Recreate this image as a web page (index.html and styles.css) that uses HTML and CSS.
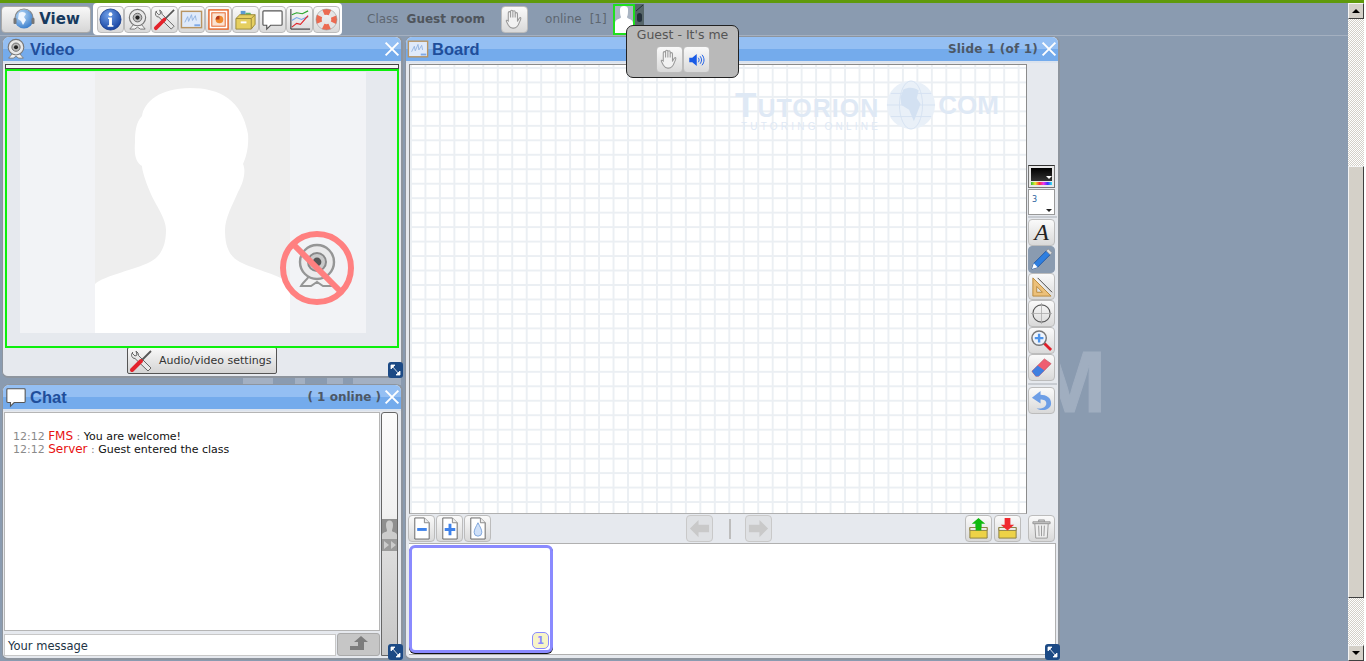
FILE: index.html
```html
<!DOCTYPE html>
<html lang="en">
<head>
<meta charset="UTF-8">
<title>Tutorion classroom</title>
<link rel="stylesheet" href="styles.css">
</head>
<body>
<svg class="defs" width="0" height="0">
  <defs>
    <radialGradient id="blue" cx="40%" cy="30%" r="75%"><stop offset="0" stop-color="#6f9fe8"/><stop offset="1" stop-color="#123f9e"/></radialGradient>
    <radialGradient id="sky" cx="35%" cy="30%" r="80%"><stop offset="0" stop-color="#bcdcf8"/><stop offset="1" stop-color="#2f76c8"/></radialGradient>
    <symbol id="i-globe" viewBox="0 0 24 24">
      <circle cx="12" cy="12" r="9.500" fill="url(#sky)"/>
      <path d="M7 6c3-2 6-1 7 1l-2 3 2 3-3 5-2-4-3-2z" fill="#eef6ff"/>
      <path d="M3 14V11a9 9 0 0 1 18 0v3" fill="none" stroke="#888" stroke-width="1.200"/>
      <rect x="1.500" y="11" width="3" height="6" rx="1" fill="#777"/><rect x="19.500" y="11" width="3" height="6" rx="1" fill="#777"/>
    </symbol>
    <symbol id="i-info" viewBox="0 0 24 24">
      <circle cx="12" cy="12" r="11" fill="url(#blue)" stroke="#0e3487" stroke-width=".8"/>
      <circle cx="12" cy="6.500" r="2" fill="#fff"/><path d="M9.500 10h4v8h1.500v1.500H9V18h1.500v-6.500h-1z" fill="#fff"/>
    </symbol>
    <symbol id="i-cam" viewBox="0 0 24 24">
      <path d="M8 17c-1 2-3 3-4 5h5l3-2 3 2h5c-1-2-3-3-4-5z" fill="#f2f2f2" stroke="#777"/>
      <circle cx="12" cy="10" r="8.500" fill="#e8e8e8" stroke="#777" stroke-width="1.200"/>
      <circle cx="12" cy="10" r="4.500" fill="#bbb" stroke="#666"/><circle cx="12" cy="10" r="2.200" fill="#222"/>
    </symbol>
    <symbol id="i-tools" viewBox="0 0 24 24">
      <path d="M4 3c-2 2-2 4 0 6l2 .5L19 22l3-3L9.500 6.500 9 4l-2-2 1 4-2 1-3-3z" fill="#e8e8e8" stroke="#666"/>
      <path d="M22 2 12 12" stroke="#555" stroke-width="1.800"/>
      <path d="M12 12 3 21" stroke="#e3222b" stroke-width="4" stroke-linecap="round"/>
    </symbol>
    <symbol id="i-board" viewBox="0 0 24 24">
      <rect x="1.500" y="3.500" width="21" height="17" fill="#dfeafa" stroke="#b89563" stroke-width="1.500"/>
      <path d="M5 15l3-6 1 5 3-7 1 6 3-5 1 5" fill="none" stroke="#93b4e0"/>
      <rect x="15" y="17" width="6" height="2" fill="#7fa9e6"/>
    </symbol>
    <symbol id="i-slides" viewBox="0 0 24 24">
      <rect x="2" y="2" width="20" height="20" fill="#fff" stroke="#e5652a" stroke-width="1.500"/>
      <rect x="5" y="5" width="14" height="14" fill="#fbe3d2" stroke="#e5652a"/>
      <circle cx="13" cy="12" r="4" fill="#ef8a2e"/><path d="M13 12V8a4 4 0 0 0-4 4z" fill="#b5381b"/>
    </symbol>
    <symbol id="i-files" viewBox="0 0 24 24">
      <path d="M7 3h5v5H7z" fill="#5b9ad1"/><path d="M12 5h5l3 5h-8z" fill="#5fb56a"/>
      <path d="M2 11l4-4h16v10l-4 5H2z" fill="#e6cf5f" stroke="#9c8a39"/>
      <path d="M18 11v11M2 11h16l4-4" fill="none" stroke="#9c8a39"/>
      <rect x="7" y="14" width="6" height="2" fill="#fff"/>
    </symbol>
    <symbol id="i-bubble" viewBox="0 0 24 24">
      <path d="M3 3h18a1 1 0 0 1 1 1v13a1 1 0 0 1-1 1H10l-4 4v-4H3a1 1 0 0 1-1-1V4a1 1 0 0 1 1-1z" fill="#fff" stroke="#555" stroke-width="1.200"/>
    </symbol>
    <symbol id="i-chart" viewBox="0 0 24 24">
      <path d="M3 1v21h20" fill="none" stroke="#222"/>
      <path d="M4 7l5-2 6 1 6-3" fill="none" stroke="#2ca52c" stroke-width="1.200"/>
      <path d="M4 13l5-3 5 2 7-3" fill="none" stroke="#79a8e8" stroke-width="1.200"/>
      <path d="M4 20l5-4 4 1 8-9" fill="none" stroke="#e0262b" stroke-width="1.200"/>
    </symbol>
    <symbol id="i-buoy" viewBox="0 0 24 24">
      <circle cx="12" cy="12" r="8" fill="none" stroke="#e4e4e4" stroke-width="6"/>
      <circle cx="12" cy="12" r="8" fill="none" stroke="#ec6a50" stroke-width="6" stroke-dasharray="7 5.570" stroke-dashoffset="3.500"/>
      <circle cx="12" cy="12" r="11" fill="none" stroke="#999" stroke-width=".6"/>
    </symbol>
    <symbol id="i-hand" viewBox="0 0 24 24">
      <path d="M6.500 13V6a1.200 1.200 0 0 1 2.400 0v5V4.500a1.200 1.200 0 0 1 2.400 0V11V5a1.200 1.200 0 0 1 2.400 0v6V7a1.200 1.200 0 0 1 2.400 0v8c1 -2 2-4 3-4 1 .3.500 2-1 5-1 3-3 6-6 6h-1c-2.500 0-3.500-1.500-4.500-3l-2-4c-.7-1.200.6-1.800 1.900-.5z" fill="#f2f2f2" stroke="#999" stroke-width="1.100" transform="translate(-1 -1)"/>
    </symbol>
    <symbol id="i-sound" viewBox="0 0 24 24">
      <path d="M3 9h4l6-5v16l-6-5H3z" fill="#1a5be6"/>
      <path d="M15 9c1.500 2 1.500 4 0 6M17.500 7c2.500 3 2.500 7 0 10M20 5c3.500 4 3.500 10 0 14" fill="none" stroke="#1a5be6" stroke-width="1.300"/>
    </symbol>
    <symbol id="i-pen" viewBox="0 0 24 24">
      <path d="M2 22l2-6L17 3l4 4L8 20z" fill="#2f7fe0" stroke="#174f9c" stroke-width=".8"/>
      <path d="M17 3l2-2 4 4-2 2z" fill="#ddd" stroke="#888" stroke-width=".6"/>
      <path d="M2 22l2-6 4 4z" fill="#fff"/>
    </symbol>
    <symbol id="i-square" viewBox="0 0 24 24">
      <path d="M3 3v19h19zM7 12v6h6z" fill="#ecc07a" stroke="#b98a3e" fill-rule="evenodd"/>
      <path d="M8 3l15 15" stroke="#444"/>
    </symbol>
    <symbol id="i-circle" viewBox="0 0 24 24">
      <circle cx="12" cy="12" r="9" fill="none" stroke="#555" stroke-width="1.100"/>
      <path d="M12 1v22M1 12h22" stroke="#aaa" stroke-width=".8"/>
    </symbol>
    <symbol id="i-zoom" viewBox="0 0 24 24">
      <path d="M14 14l8 8" stroke="#e0202a" stroke-width="3"/>
      <circle cx="9.500" cy="9.500" r="7.500" fill="#eef4fc" stroke="#777" stroke-width="1.500"/>
      <path d="M9.500 5v9M5 9.500h9" stroke="#4e94ea" stroke-width="2.500"/>
    </symbol>
    <symbol id="i-eraser" viewBox="0 0 24 24">
      <path d="M2 16L15 3l7 5L9 21H6z" fill="#ef5d70" stroke="#b7404e" stroke-width=".6"/>
      <path d="M2 16l6-6 7 5-6 6H6z" fill="#3f7fe0"/>
    </symbol>
    <symbol id="i-undo" viewBox="0 0 24 24">
      <path d="M2 9l9-7v4c6 0 11 3 11 9 0 4-4 7-9 7-3 0-5-1-6-2 5 1 10-1 10-5 0-3-3-4-6-4v4z" fill="#6d9ee6"/>
    </symbol>
    <symbol id="i-page" viewBox="0 0 24 24">
      <path d="M5 1h10l5 5v17H5z" fill="#fff" stroke="#666"/><path d="M15 1v5h5" fill="#eee" stroke="#888"/>
    </symbol>
    <symbol id="i-up" viewBox="0 0 24 24">
      <path d="M12 1l7 6h-4v6H9V7H5z" fill="#0fba0f"/>
      <path d="M3 11h18v11H3z" fill="#edd247" stroke="#8b8043"/><path d="M3 11h18v3H3z" fill="#f2f2f2" stroke="#8b8043"/><path d="M9 7h6v7H9z" fill="#0fba0f"/>
    </symbol>
    <symbol id="i-down" viewBox="0 0 24 24">
      <path d="M3 11h18v11H3z" fill="#edd247" stroke="#8b8043"/><path d="M3 11h18v3H3z" fill="#f2f2f2" stroke="#8b8043"/>
      <path d="M9 1h6v7h4l-7 6-7-6h4z" fill="#f0282e"/>
    </symbol>
    <symbol id="i-trash" viewBox="0 0 24 24">
      <path d="M3 5h18v2H3zM9 5V3h6v2" fill="#ccc" stroke="#888" stroke-width=".8"/>
      <path d="M5 7h14l-1 15H6z" fill="#eee" stroke="#999"/>
      <path d="M9 9l.5 11M12 9v11M15 9l-.5 11" stroke="#999"/>
    </symbol>
    <symbol id="i-corner" viewBox="0 0 15 16">
      <rect width="15" height="16" rx="3" fill="#1c4a85"/>
      <path d="M3 3h4L3 7zM12 13H8l4-4zM4 4l7 8" fill="#fff" stroke="#fff" stroke-width=".8"/>
    </symbol>
  </defs>
</svg>

<div class="screen">
  <div class="topline"></div>
  <div class="main">
    <div class="app">
      <div class="wallmark">M</div>
      <div class="gapmark"></div>

      <header class="toolbar">
        <button class="view-btn"><svg class="ic20"><use href="#i-globe"/></svg>View</button>
        <div class="tool-group">
          <button class="btn"><svg class="ic"><use href="#i-info"/></svg></button>
          <button class="btn"><svg class="ic"><use href="#i-cam"/></svg></button>
          <button class="btn"><svg class="ic"><use href="#i-tools"/></svg></button>
          <button class="btn"><svg class="ic"><use href="#i-board"/></svg></button>
          <button class="btn"><svg class="ic"><use href="#i-slides"/></svg></button>
          <button class="btn"><svg class="ic"><use href="#i-files"/></svg></button>
          <button class="btn"><svg class="ic"><use href="#i-bubble"/></svg></button>
          <button class="btn"><svg class="ic"><use href="#i-chart"/></svg></button>
          <button class="btn"><svg class="ic"><use href="#i-buoy"/></svg></button>
        </div>
        <span class="class-label">Class</span>
        <strong class="class-name">Guest room</strong>
        <button class="btn hand-btn"><svg class="ic"><use href="#i-hand"/></svg></button>
        <span class="online">online</span>
        <span class="online-count">[1]</span>
        <div class="user-tile">
          <div class="user-face">
            <svg width="18" height="27" viewBox="0 0 18 27"><path d="M5 3c0-4 8-4 8 0 0 4 0 6-1 8 0 2 6 2 6 6v10H0V17c0-4 6-4 6-6-1-2-1-4-1-8z" fill="#fff"/></svg>
          </div>
          <div class="user-mic">
            <svg width="9" height="20" viewBox="0 0 9 20"><path d="M1 7l7-6" stroke="#23303a"/><rect x="2" y="9" width="5" height="9" rx="2.500" fill="#23303a"/></svg>
          </div>
        </div>
      </header>

      <div class="user-tip">
        <div class="tip-name">Guest - It's me</div>
        <div class="tip-btns">
          <button class="btn"><svg class="ic"><use href="#i-hand"/></svg></button>
          <button class="btn"><svg class="ic ic-small"><use href="#i-sound"/></svg></button>
        </div>
      </div>

      <div class="workspace">
        <div class="left-col">
          <section class="panel video-panel">
            <div class="head">
              <svg class="ic-head"><use href="#i-cam"/></svg>
              <h2>Video</h2>
              <span class="close"></span>
            </div>
            <div class="strip"></div>
            <div class="video-frame">
              <svg class="portrait" width="346" height="261" viewBox="0 0 346 261">
                <rect width="346" height="261" fill="#f2f3f6"/>
                <rect x="75" width="195" height="261" fill="#eee"/>
                <path d="M75 261V212C85 203 115 198 130 190C142 184 146 172 146 158C146 146 136 134 130 120C125 108 122 98 122 94C116 90 114 84 115 70C115 60 116 50 122 44C124 30 140 16 170 16C200 16 222 28 228 62C229 75 226 86 223 92C226 98 224 110 218 120C212 134 205 146 205 158C205 172 208 184 220 190C235 198 262 203 270 212V261Z" fill="#fff"/>
              </svg>
              <svg class="no-cam" width="78" height="78" viewBox="0 0 78 78">
                <g transform="translate(15 13) scale(2)"><use href="#i-cam" width="24" height="24" opacity=".75"/></g>
                <circle cx="39" cy="39" r="34" fill="none" stroke="#ff8080" stroke-width="6"/>
                <path d="M15 15l48 48" stroke="#ff8080" stroke-width="6"/>
              </svg>
            </div>
            <div class="settings-row">
              <button class="settings-btn"><svg class="ic20"><use href="#i-tools"/></svg>Audio/video settings</button>
            </div>
            <svg class="corner"><use href="#i-corner"/></svg>
          </section>

          <section class="panel chat-panel">
            <div class="head">
              <svg class="ic-head"><use href="#i-bubble"/></svg>
              <h2>Chat</h2>
              <span class="head-note">( 1 online )</span>
              <span class="close"></span>
            </div>
            <div class="chat-body">
              <div class="chat-main">
                <div class="chat-log">
                  <p><span class="time">12:12</span> <span class="who">FMS</span> <span class="colon">:</span> You are welcome!</p>
                  <p><span class="time">12:12</span> <span class="who">Server</span> <span class="colon">:</span> Guest entered the class</p>
                </div>
                <div class="chat-send">
                  <div class="chat-input">Your message</div>
                  <button class="send-btn">
                    <svg width="18" height="14" viewBox="0 0 18 14"><path d="M0 14v-4h8V6H4l7-6 7 6h-4v8z" fill="#7d7d7d"/></svg>
                  </button>
                </div>
              </div>
              <div class="chat-side">
                <div class="side-user">
                  <svg width="15" height="19" viewBox="0 0 15 19"><path d="M4 5a3.500 4.500 0 0 1 7 0c0 3-1 4-1 6 0 1 5 1 5 4v4H0v-4c0-3 5-3 5-4 0-2-1-3-1-6z" fill="#ccc"/></svg>
                </div>
                <div class="side-arrows">
                  <svg width="12" height="8" viewBox="0 0 12 8"><path d="M0 0l5 4-5 4zM7 0l5 4-5 4z" fill="#ccc"/></svg>
                </div>
              </div>
            </div>
            <svg class="corner"><use href="#i-corner"/></svg>
          </section>
        </div>

        <section class="panel board-panel">
          <div class="head board-head">
            <svg class="ic-head"><use href="#i-board"/></svg>
            <h2>Board</h2>
            <span class="head-note slide-note">Slide 1 (of 1)</span>
            <span class="close"></span>
          </div>
          <div class="board-body">
            <div class="canvas">
              <div class="logo">
                <div class="logo-top">
                  <span class="logo-name">Tutorion</span>
                  <svg class="logo-globe" width="50" height="50" viewBox="0 0 52 52">
                    <circle cx="26" cy="26" r="25" fill="#e9f0f8"/>
                    <g fill="none" stroke="#d5e2f1">
                      <ellipse cx="26" cy="26" rx="12" ry="25"/><path d="M1 26h50M5 14h42M5 38h42"/>
                    </g>
                    <path d="M18 10c6-3 12-2 16 1l-2 8 4 6-7 18-5-12-8-5-1-8z" fill="#d3e1f2"/>
                  </svg>
                  <span class="logo-com">COM</span>
                </div>
                <div class="logo-sub">TUTORING ONLINE</div>
              </div>
            </div>
            <div class="tools">
              <div class="color-pick"><span class="swatch"></span><span class="rainbow"></span></div>
              <div class="size-pick">3</div>
              <div class="tool-sep"></div>
              <button class="btn script-btn">A</button>
              <button class="btn is-on"><svg class="ic"><use href="#i-pen"/></svg></button>
              <button class="btn"><svg class="ic"><use href="#i-square"/></svg></button>
              <button class="btn"><svg class="ic"><use href="#i-circle"/></svg></button>
              <button class="btn"><svg class="ic"><use href="#i-zoom"/></svg></button>
              <button class="btn"><svg class="ic"><use href="#i-eraser"/></svg></button>
              <div class="tool-sep tool-sep-low"></div>
              <button class="btn"><svg class="ic"><use href="#i-undo"/></svg></button>
            </div>
          </div>
          <div class="board-bar">
            <button class="btn"><svg class="ic" viewBox="0 0 24 24"><use href="#i-page" width="24" height="24"/><path d="M7.500 13h10" stroke="#3f82ea" stroke-width="3"/></svg></button>
            <button class="btn"><svg class="ic" viewBox="0 0 24 24"><use href="#i-page" width="24" height="24"/><path d="M12.500 7v12M7 13h11" stroke="#3f82ea" stroke-width="3"/></svg></button>
            <button class="btn"><svg class="ic" viewBox="0 0 24 24"><use href="#i-page" width="24" height="24"/><path d="M12.500 6c-2 4-4 7-4 10a4 4 0 0 0 8 0c0-3-2-6-4-10z" fill="#cfe0f8" stroke="#7ba3da"/></svg></button>
            <button class="btn off nav-prev"><svg class="ic" viewBox="0 0 24 24"><path d="M2 12l9-9v5h11v8H11v5z" fill="#c9c9c9"/></svg></button>
            <span class="nav-sep"></span>
            <button class="btn off"><svg class="ic" viewBox="0 0 24 24"><path d="M22 12l-9-9v5H2v8h11v5z" fill="#c9c9c9"/></svg></button>
            <button class="btn bar-up"><svg class="ic"><use href="#i-up"/></svg></button>
            <button class="btn bar-down"><svg class="ic"><use href="#i-down"/></svg></button>
            <button class="btn bar-trash"><svg class="ic"><use href="#i-trash"/></svg></button>
          </div>
          <div class="slides">
            <div class="thumb"><span class="thumb-num">1</span></div>
          </div>
          <svg class="corner"><use href="#i-corner"/></svg>
        </section>
      </div>
    </div>

    <div class="scrollbar">
      <div class="sb-btn"><span class="tri-up"></span></div>
      <div class="sb-thumb"></div>
      <div class="sb-btn sb-last"><span class="tri-down"></span></div>
    </div>
  </div>
</div>
</body>
</html>
```

FILE: styles.css
```css
* {
  box-sizing: border-box;
}
html, body {
  margin: 0;
  height: 100%;
  overflow: hidden;
  background: #fff;
}
body {
  font-family: "DejaVu Sans", Verdana, sans-serif;
  font-size: 12px;
  color: #555;
}
button {
  font-family: inherit;
  padding: 0;
  margin: 0;
}
.defs {
  position: absolute;
}

.screen {
  width: 1364px;
  height: 661px;
  display: flex;
  flex-direction: column;
}
.topline {
  height: 3px;
  background: #5f9a0b;
  flex: none;
}
.main {
  flex: 1;
  display: flex;
  min-height: 0;
}
.app {
  position: relative;
  flex: 1;
  background: #8a9bb0;
  overflow: hidden;
}

/* big faded logo behind the panels */
.wallmark {
  position: absolute;
  left: 1033px;
  top: 335px;
  font: bold 88px/1 "Liberation Sans", Arial, sans-serif;
  -webkit-text-stroke: 1px #a0aec0;
  color: #a0aec0;
}
.gapmark {
  position: absolute;
  left: 243px;
  top: 372px;
  width: 158px;
  height: 10px;
  background: linear-gradient(90deg, #a3b0c2 0 30px, #8a9bb0 30px 52px, #a3b0c2 52px 62px, #8a9bb0 62px 84px, #a3b0c2 84px 100px, #8a9bb0 100px 110px, #a3b0c2 110px);
}

/* top toolbar */
.toolbar {
  position: relative;
  height: 33px;
  display: flex;
  align-items: center;
  border-bottom: 1px solid #a4b0c0;
  padding-left: 1px;
}
.btn {
  width: 27px;
  height: 27px;
  flex: none;
  display: flex;
  align-items: center;
  justify-content: center;
  border: 1px solid #bcbcbc;
  border-radius: 4px;
  background: linear-gradient(#fafafa, #d9d9d9);
}
.ic {
  width: 23px;
  height: 23px;
}
.ic-small {
  width: 18px;
  height: 18px;
}
.ic20 {
  width: 24px;
  height: 24px;
  flex: none;
}
.view-btn {
  width: 90px;
  height: 27px;
  display: flex;
  align-items: center;
  justify-content: center;
  gap: 3px;
  border: 1px solid #a9a9a9;
  border-radius: 4px;
  background: linear-gradient(#f8f8f8, #d6d6d6);
  font: bold 15px "DejaVu Sans", Verdana, sans-serif;
  color: #173a5e;
}
.tool-group {
  margin-left: 2px;
  height: 32px;
  padding: 0 2px 0 4px;
  display: flex;
  align-items: center;
  background: #fff;
  border-radius: 4px;
}
.class-label {
  margin-left: 25px;
  color: #5d6670;
}
.class-name {
  margin-left: 8px;
  color: #4f555c;
}
.hand-btn {
  margin-left: 16px;
}
.online {
  margin-left: 17px;
  color: #5d6670;
}
.online-count {
  margin-left: 8px;
  color: #5d6670;
}
.user-tile {
  margin-left: 6px;
  height: 31px;
  display: flex;
}
.user-face {
  width: 22px;
  border: 2px solid #1fe01f;
  background: #a9b4c2;
  display: flex;
  align-items: flex-end;
  justify-content: center;
}
.user-mic {
  width: 9px;
  background: #56666a;
}

/* tooltip under the user tile */
.user-tip {
  position: absolute;
  left: 626px;
  top: 22px;
  width: 113px;
  height: 53px;
  z-index: 5;
  background: #b9b9b9;
  border: 1px solid #222;
  border-radius: 7px;
  text-align: center;
}
.tip-name {
  font-size: 12.500px;
  line-height: 16px;
  margin-top: 1px;
  color: #555;
}
.tip-btns {
  display: flex;
  justify-content: center;
  margin-top: 3px;
}

/* panels */
.workspace {
  position: relative;
  display: flex;
  gap: 2px;
  padding-left: 2px;
  height: 625px;
}
.left-col {
  width: 401px;
  display: flex;
  flex-direction: column;
  gap: 6px;
}
.panel {
  position: relative;
  background: #e6e9ee;
  border: 1px solid #8e959e;
  border-right-width: 2px;
  border-bottom-width: 2px;
  border-radius: 7px 7px 6px 6px;
}
.video-panel {
  height: 342px;
}
.chat-panel {
  height: 276px;
}
.board-panel {
  width: 655px;
  height: 624px;
}
.head {
  height: 26px;
  display: flex;
  align-items: center;
  padding-left: 2px;
  border-bottom: 2px solid #dbe3ee;
  border-radius: 6px 6px 0 0;
  background: linear-gradient(#94bff3 0 50%, #74abec 50%);
}
.head h2 {
  margin: 0 0 0 3px;
  font: bold 16.500px "Liberation Sans", Arial, sans-serif;
  color: #1f4e9b;
}
.board-head {
  padding-left: 1px;
}
.ic-head {
  width: 22px;
  height: 22px;
  flex: none;
}
.head-note {
  margin-left: auto;
  font-weight: bold;
  font-size: 12px;
  color: #4d5866;
}
.slide-note {
  letter-spacing: .2px;
}
.close {
  position: relative;
  width: 16px;
  height: 16px;
  margin: 0 1px 0 3px;
  flex: none;
}
.head h2 + .close {
  margin-left: auto;
}
.close::before, .close::after {
  content: "";
  position: absolute;
  left: -1px;
  top: 7px;
  width: 18px;
  height: 2px;
  background: #fff;
  transform: rotate(45deg);
}
.close::after {
  transform: rotate(-45deg);
}
.corner {
  position: absolute;
  right: -2px;
  bottom: -2px;
  width: 15px;
  height: 16px;
  z-index: 3;
}

/* video */
.strip {
  height: 5px;
  margin: 1px 2px 0;
  background: #f7f7f7;
  border: 1px solid #444;
}
.video-frame {
  position: relative;
  height: 279px;
  margin: 0 2px;
  border: 2px solid #0cf00c;
  padding: 1px 0 0 13px;
}
.portrait {
  display: block;
}
.no-cam {
  position: absolute;
  left: 271px;
  top: 158px;
}
.settings-row {
  display: flex;
  justify-content: center;
  margin-top: -1px;
}
.settings-btn {
  width: 150px;
  height: 27px;
  display: flex;
  align-items: center;
  gap: 6px;
  padding-left: 1px;
  border: 1px solid #555;
  border-radius: 2px;
  background: linear-gradient(#f8f8f8, #d4d4d4);
  font-size: 11px;
  color: #333;
}

/* chat */
.chat-body {
  display: flex;
  padding: 1px 0 0 1px;
  gap: 1px;
}
.chat-main {
  width: 376px;
}
.chat-log {
  height: 219px;
  padding: 17px 0 0 8px;
  background: #fff;
  border: 1px solid #b5b5b5;
  font-size: 11px;
  line-height: 13px;
  color: #111;
}
.chat-log p {
  margin: 0;
}
.time {
  color: #8a8a8a;
}
.who {
  color: #e81010;
  font-size: 12px;
  line-height: 1;
}
.colon {
  color: #888;
}
.chat-send {
  display: flex;
  margin-top: 3px;
}
.chat-input {
  width: 332px;
  height: 22px;
  padding: 4px 0 0 3px;
  background: #fff;
  border: 1px solid #c8c8c8;
  font-size: 11.500px;
  line-height: 14px;
  color: #234;
}
.send-btn {
  width: 43px;
  height: 23px;
  margin-left: 1px;
  margin-top: -1px;
  border: 1px solid #aaa;
  border-radius: 3px;
  background: #c6c6c6;
}
.chat-side {
  width: 17px;
  height: 244px;
  border: 1px solid #666;
  border-radius: 3px 3px 0 0;
  padding-top: 106px;
  background: linear-gradient(#fbfbfb, #f1f1f1 100px, #dcdcdc 140px, #c6c6c6);
}
.side-user {
  height: 20px;
  background: #8f8f8f;
  display: flex;
  justify-content: center;
  align-items: flex-end;
}
.side-arrows {
  height: 12px;
  background: #9b9b9b;
  display: flex;
  justify-content: center;
  align-items: center;
}

/* board */
.board-body {
  display: flex;
}
.canvas {
  position: relative;
  width: 618px;
  height: 450px;
  margin: 1px 0 0 3px;
  background-color: #fff;
  background-image:
    linear-gradient(#ebeff3 2px, transparent 2px),
    linear-gradient(90deg, #ebeff3 2px, transparent 2px);
  background-size: 14.470px 14.470px;
  background-position: 0 2px;
  border: 1px solid #8b8b8b;
  border-bottom-color: #b0b0b0;
}
.logo {
  position: absolute;
  left: 325px;
  top: 15px;
}
.logo-top {
  display: flex;
  align-items: center;
  font-weight: bold;
  font-family: "Liberation Sans", Arial, sans-serif;
  color: #dfe9f5;
}
.logo-name {
  font-size: 35px;
  line-height: 26px;
  font-variant: small-caps;
  letter-spacing: 1px;
}
.logo-globe {
  margin-left: 7px;
  flex: none;
}
.logo-com {
  margin-left: 2px;
  font-size: 26px;
}
.logo-sub {
  margin-top: -8px;
  margin-left: 6px;
  font: 10px/10px "Liberation Sans", Arial, sans-serif;
  letter-spacing: 3.200px;
  color: #dfe9f5;
}
.tools {
  width: 30px;
  padding: 102px 0 0 1px;
  display: flex;
  flex-direction: column;
}
.color-pick {
  position: relative;
  width: 27px;
  height: 23px;
  padding: 2px;
  background: #e8e8e8;
  border: 1px solid #777;
  border-top-color: #333;
}
.color-pick::after {
  content: "";
  position: absolute;
  right: 2px;
  top: 10px;
  border: 3px solid transparent;
  border-top-color: #fff;
  border-bottom-width: 0;
}
.swatch {
  display: block;
  height: 13px;
  background: linear-gradient(#000, #333);
}
.rainbow {
  display: block;
  height: 3px;
  margin-top: 1px;
  background: linear-gradient(90deg, #3b3, #ee3, #f33, #e3e, #33f, #3ee);
}
.size-pick {
  position: relative;
  width: 27px;
  height: 26px;
  margin-top: 1px;
  padding: 2px 0 0 3px;
  background: #fff;
  border: 1px solid #999;
  font-size: 8px;
  line-height: 16px;
  color: #2a5f9e;
}
.size-pick::after {
  content: "";
  position: absolute;
  right: 2px;
  bottom: 2px;
  border: 3px solid transparent;
  border-top-color: #222;
  border-bottom-width: 0;
}
.tool-sep {
  height: 2px;
  margin: 1px 0;
  background: #c8ccd2;
}
.tool-sep-low {
  margin: 2px 0;
}
.script-btn {
  font: italic 24px "Liberation Serif", serif;
  color: #222;
}
.is-on {
  background: #8a9bb0;
  border-color: #8a9bb0;
}
.board-bar {
  display: flex;
  align-items: flex-start;
  height: 29px;
  padding: 1px 3px 0 2px;
  gap: 1px;
}
.board-bar .off {
  background: #dfe1e4;
  border-color: #c9c9c9;
}
.nav-prev {
  margin-left: 194px;
}
.nav-sep {
  width: 2px;
  height: 20px;
  margin: 4px 13px 0 15px;
  background: #bdbdbd;
}
.bar-up {
  margin-left: auto;
}
.bar-down {
  margin-left: 1px;
}
.bar-trash {
  margin-left: 6px;
}
.slides {
  height: 112px;
  margin-left: 3px;
  width: 647px;
  padding-top: 1px;
  background: #fff;
  border: 1px solid #b0b0b0;
  border-left: 0;
}
.thumb {
  position: relative;
  width: 144px;
  height: 108px;
  background: #fff;
  border: 3px solid #8a8aff;
  border-radius: 6px;
  box-shadow: 0 1px 0 #111;
}
.thumb-num {
  position: absolute;
  right: 1px;
  bottom: 1px;
  width: 17px;
  height: 17px;
  text-align: center;
  font-size: 10px;
  font-weight: bold;
  line-height: 15px;
  color: #8a8aff;
  background: #f7f4c8;
  border: 1px solid #8a8aff;
  border-radius: 5px;
}

/* windows style page scrollbar */
.scrollbar {
  width: 16px;
  flex: none;
  display: flex;
  flex-direction: column;
  background: conic-gradient(#fff 25%, #d4d0c8 0 50%, #fff 0 75%, #d4d0c8 0) 0 0 / 2px 2px;
}
.sb-btn, .sb-thumb {
  background: #d4d0c8;
  border: 1px solid;
  border-color: #f4f4f4 #404040 #404040 #f4f4f4;
}
.sb-btn {
  height: 16px;
  flex: none;
  display: flex;
  align-items: center;
  justify-content: center;
}
.sb-thumb {
  height: 432px;
  margin-top: 147px;
}
.sb-last {
  margin-top: auto;
}
.tri-up, .tri-down {
  border: 4px solid transparent;
}
.tri-up {
  border-top: 0;
  border-bottom-color: #000;
}
.tri-down {
  border-bottom: 0;
  border-top-color: #000;
}
```
